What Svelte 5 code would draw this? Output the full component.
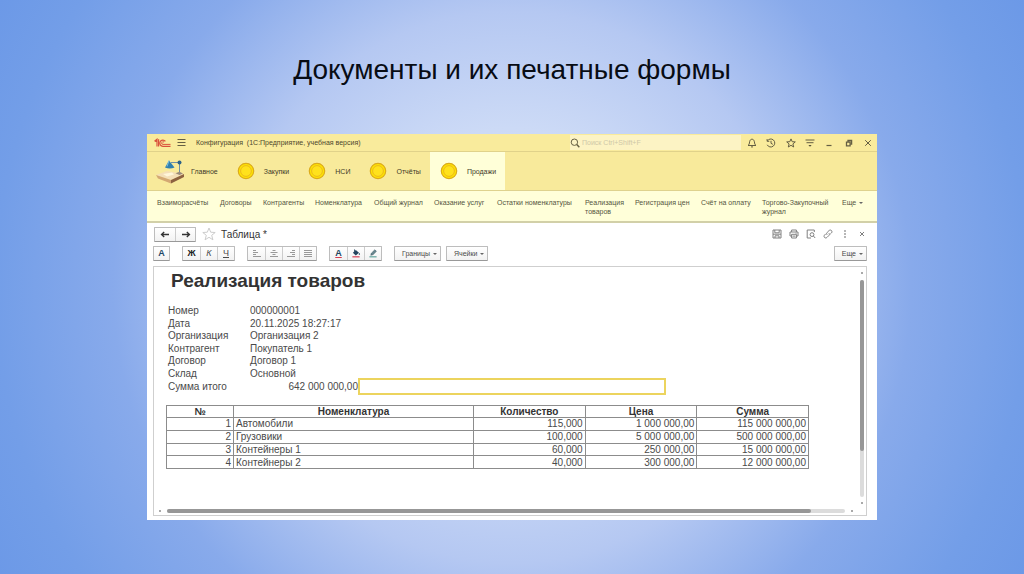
<script lang="ts">
  const sections = ['Закупки', 'НСИ', 'Отчёты', 'Продажи']
  let current = 'Продажи'

  const commands = [
    'Взаиморасчёты', 'Договоры', 'Контрагенты', 'Номенклатура',
    'Общий журнал', 'Оказание услуг', 'Остатки номенклатуры',
    'Реализация товаров', 'Регистрация цен', 'Счёт на оплату',
    'Торгово-Закупочный журнал'
  ]

  const details = [
    ['Номер', '000000001'],
    ['Дата', '20.11.2025 18:27:17'],
    ['Организация', 'Организация 2'],
    ['Контрагент', 'Покупатель 1'],
    ['Договор', 'Договор 1'],
    ['Склад', 'Основной']
  ]

  const rows = [
    ['Автомобили', '115,000', '1 000 000,00', '115 000 000,00'],
    ['Грузовики', '100,000', '5 000 000,00', '500 000 000,00'],
    ['Контейнеры 1', '60,000', '250 000,00', '15 000 000,00'],
    ['Контейнеры 2', '40,000', '300 000,00', '12 000 000,00']
  ]

  // line groups for the alignment buttons
  const aligns = [
    { name: 'По левому краю', d: 'M1 1.5h3M1 3.5h5M1 5.5h3M1 7.5h8' },
    { name: 'По центру', d: 'M3.5 1.5h3M1.5 3.5h7M3.5 5.5h3M1 7.5h8' },
    { name: 'По правому краю', d: 'M6 1.5h3M4 3.5h5M6 5.5h3M1 7.5h8' },
    { name: 'По ширине', d: 'M1 1.5h8M1 3.5h8M1 5.5h8M1 7.5h8' }
  ]
</script>

<main class="slide">
  <h1>Документы и их печатные формы</h1>

  <div class="window">
    <header class="titlebar">
      <svg class="logo" viewBox="0 0 17 10" aria-label="1С">
        <path d="M0.5 3.2L3 1.2V8.6M4.6 1.2V8.6M2 2.6V4" fill="none" stroke="#d9513c" stroke-width="1.2" />
        <path d="M11.4 3.4A3.1 3.1 0 1 0 8.9 8.3H16.5" fill="none" stroke="#d9513c" stroke-width="1.3" />
        <path d="M10 4.2A1.3 1.3 0 1 0 9 6.4H16.5" fill="none" stroke="#d9513c" stroke-width="1" />
      </svg>
      <button class="bare" aria-label="Меню">
        <svg class="burger" viewBox="0 0 9 9"><path d="M0.5 1.5h8M0.5 4.5h8M0.5 7.5h8" /></svg>
      </button>
      <span class="app-name">Конфигурация&nbsp; (1С:Предприятие, учебная версия)</span>
      <label class="search">
        <svg viewBox="0 0 10 10"><circle cx="4.4" cy="4.2" r="3.2" /><path d="M6.8 6.6L9.3 9.3" stroke-width="1.4" /></svg>
        <input type="text" placeholder="Поиск Ctrl+Shift+F" aria-label="Поиск" />
      </label>
      <div class="tools">
        <button class="bare" aria-label="Уведомления">
          <svg viewBox="0 0 10 10"><path d="M1 7.5C2.3 6.6 2.3 5.6 2.6 3.8C2.9 2.1 3.8 1.2 5 1.2S7.1 2.1 7.4 3.8C7.7 5.6 7.7 6.6 9 7.5ZM4 8.9h2" /></svg>
        </button>
        <button class="bare" aria-label="История">
          <svg viewBox="0 0 10 10"><path d="M1.3 3A4 4 0 1 1 1.2 6.8M1.1 1V3.3H3.3M5 2.8V5.3L6.8 6.3" /></svg>
        </button>
        <button class="bare" aria-label="Избранное">
          <svg viewBox="0 0 10 10"><path d="M5 0.9L6.2 3.7L9.3 3.9L6.9 5.9L7.7 9L5 7.3L2.3 9L3.1 5.9L0.7 3.9L3.8 3.7Z" /></svg>
        </button>
        <button class="bare" aria-label="Настройки">
          <svg viewBox="0 0 10 10"><path d="M0.5 2h9M1.5 4.7h7" /><path d="M3.4 7L5 8.8L6.6 7Z" fill="#554f35" stroke="none" /></svg>
        </button>
        <button class="bare" aria-label="Свернуть">
          <svg viewBox="0 0 10 10"><path d="M2.5 7.5h5" stroke-width="1.2" /></svg>
        </button>
        <button class="bare" aria-label="Восстановить">
          <svg viewBox="0 0 10 10"><path d="M2.5 4.2h3.6v3.6h-3.6zM4 3.8V2.5H7.6V6.2H6.8" stroke-width="1.3" /></svg>
        </button>
        <button class="bare" aria-label="Закрыть">
          <svg viewBox="0 0 10 10"><path d="M2.2 2.2L7.8 7.8M7.8 2.2L2.2 7.8" /></svg>
        </button>
      </div>
    </header>

    <nav class="sections">
      <button class="section home">
        <svg class="desk" viewBox="0 0 30 26">
          <path d="M1 17L12 13L29 16L16 22Z" fill="#f4dfb8" />
          <path d="M1 17L16 22V25.5L3 20.5Z" fill="#d3a873" />
          <path d="M16 22L29 16V19L16 25.5Z" fill="#8d6240" />
          <path d="M10 9.5L14 2.5L19.5 9.5Q15 11.5 10 9.5Z" fill="#2f7fae" />
          <path d="M14 2.5L12 8.5" stroke="#7fc0de" />
          <path d="M16 4.5L24.5 4.5V15" stroke="#6d8fa5" />
          <circle cx="24.5" cy="4.5" r="2" fill="#2d6387" />
          <path d="M20.5 15.3L24.5 13.8L28 15.6L24.5 17Z" fill="#9a8a7a" />
          <path d="M8 16L17 14.6L19 16.6L12 18.4Z" fill="#fff6da" />
        </svg>
        Главное
      </button>
      {#each sections as name (name)}
        <button class="section" class:active={name === current} on:click={() => (current = name)}>
          <svg class="coin" viewBox="0 0 18 18">
            <circle cx="9" cy="9" r="7.7" fill="#ffe600" stroke="#dcab1c" stroke-width="1.2" />
            <circle cx="9" cy="9" r="5.4" fill="#ffe21c" stroke="#ecb91c" stroke-width="1" />
          </svg>
          {name}
        </button>
      {/each}
    </nav>

    <nav class="commands">
      {#each commands as command (command)}
        <a href="#top">{command}</a>
      {/each}
      <a href="#top" class="more">Еще <i class="caret"></i></a>
    </nav>

    <div class="form-head">
      <div class="group nav-group">
        <button aria-label="Назад"><svg viewBox="0 0 10 8"><path d="M9 4H1.8M4.2 1.5L1.5 4L4.2 6.5" /></svg></button>
        <button aria-label="Вперед"><svg viewBox="0 0 10 8"><path d="M1 4H8.2M5.8 1.5L8.5 4L5.8 6.5" /></svg></button>
      </div>
      <svg class="fav" viewBox="0 0 14 14"><path d="M7 1L8.7 5.2L13.2 5.5L9.7 8.3L10.9 12.8L7 10.3L3.1 12.8L4.3 8.3L0.8 5.5L5.3 5.2Z" /></svg>
      <h2>Таблица *</h2>
      <div class="form-tools">
        <button class="bare" aria-label="Сохранить">
          <svg viewBox="0 0 10 10"><path d="M1 1h8v8H1zM2.8 1v2.8h4.4V1M1 5.2h8M3 9V6.8h4V9" /></svg>
        </button>
        <button class="bare" aria-label="Печать">
          <svg viewBox="0 0 10 10"><path d="M2.6 3V1h4.8V3M2.6 7H1V3h8V7H7.4M2.6 5.3h4.8V9H2.6zM3.5 7.1h3M6.6 4.2h1" /></svg>
        </button>
        <button class="bare" aria-label="Просмотр">
          <svg viewBox="0 0 10 10"><path d="M8.3 3V1H1.2V9H5" /><circle cx="6" cy="5.6" r="1.9" /><path d="M7.4 7L9.2 9" /></svg>
        </button>
        <button class="bare" aria-label="Ссылка">
          <svg viewBox="0 0 10 10"><path d="M4.3 5.9C3.3 5.1 3.4 4.2 4.2 3.4L6 1.6C7.8 0 10 2.2 8.4 4L7.2 5.2M5.7 4.1C6.7 4.9 6.6 5.8 5.8 6.6L4 8.4C2.2 10 0 7.8 1.6 6L2.8 4.8" /></svg>
        </button>
        <button class="bare" aria-label="Ещё действия">
          <svg viewBox="0 0 10 10"><path d="M5 1.3v1.5M5 4.3v1.5M5 7.3v1.5" stroke-width="1.5" /></svg>
        </button>
        <button class="bare" aria-label="Закрыть форму">
          <svg viewBox="0 0 10 10"><path d="M3 3L7 7M7 3L3 7" /></svg>
        </button>
      </div>
    </div>

    <div class="toolbar">
      <div class="group"><button class="font">А</button></div>
      <div class="group">
        <button class="bold">Ж</button>
        <button class="italic">К</button>
        <button class="under">Ч</button>
      </div>
      <div class="group align-group">
        {#each aligns as a (a.name)}
          <button aria-label={a.name}><svg viewBox="0 0 10 9"><path d={a.d} /></svg></button>
        {/each}
      </div>
      <div class="group colors">
        <button class="text-color">А</button>
        <button aria-label="Цвет фона">
          <svg viewBox="0 0 10 10"><path d="M1.5 4.2L4.8 1.2L8.3 4.2L4.8 7.2Z" fill="#24455f" /><path d="M3.4 0.5V3" stroke="#24455f" /><path d="M8.7 4.6v2" stroke="#24455f" /><path d="M1 8.7h8" stroke="#d83b50" stroke-width="1.3" /></svg>
        </button>
        <button aria-label="Цвет рамки">
          <svg viewBox="0 0 10 10"><path d="M2.5 7L3.2 4.6L7 0.9L8.8 2.6L5 6.3Z" fill="#68878f" stroke="#3f5d66" stroke-width="0.6" /><path d="M1 8.7h8" stroke="#4e9b92" stroke-width="1.2" /></svg>
        </button>
      </div>
      <div class="drops">
        <div class="group"><button class="drop">Границы <i class="caret"></i></button></div>
        <div class="group"><button class="drop">Ячейки <i class="caret"></i></button></div>
      </div>
      <div class="group last"><button class="drop">Еще <i class="caret"></i></button></div>
    </div>

    <div class="sheet">
      <div class="page">
        <h3>Реализация товаров</h3>

        <dl class="details">
          {#each details as [label, value] (label)}
            <div class="detail"><dt>{label}</dt><dd>{value}</dd></div>
          {/each}
          <div class="detail">
            <dt>Сумма итого</dt>
            <dd class="total">642 000 000,00</dd>
            <dd class="cell"><input type="text" aria-label="Ячейка" /></dd>
          </div>
        </dl>

        <table>
          <colgroup><col class="c-num" /><col class="c-name" /><col /><col /><col /></colgroup>
          <thead>
            <tr><th>№</th><th>Номенклатура</th><th>Количество</th><th>Цена</th><th>Сумма</th></tr>
          </thead>
          <tbody>
            {#each rows as [name, count, price, sum], i (name)}
              <tr><td>{i + 1}</td><td class="name">{name}</td><td>{count}</td><td>{price}</td><td>{sum}</td></tr>
            {/each}
          </tbody>
        </table>
      </div>

      <div class="bar vertical"><i class="dot"></i><div class="track"><div class="thumb"></div></div><i class="dot"></i></div>
      <div class="bar horizontal"><i class="dot"></i><div class="track"><div class="thumb"></div></div><i class="dot"></i></div>
    </div>
  </div>
</main>

<style>
:global(body) {
  margin: 0;
}
.slide {
  box-sizing: border-box;
  min-height: 100vh;
  padding: 50px 147px 54px;
  display: flex;
  flex-direction: column;
  font-family: "Liberation Sans", Arial, sans-serif;
  background: radial-gradient(circle farthest-corner at center, #d8e4f9 0%, #ccdaf6 27%, #b5c8f2 47%, #88aaeb 68%, #739ee8 88%, #6c99e7 100%);
}
h1 {
  margin: 0 0 44px;
  font-size: 28px;
  line-height: 40px;
  font-weight: normal;
  text-align: center;
  color: #080c14;
}
.window {
  flex: 1;
  display: flex;
  flex-direction: column;
  background: #fff;
  color: #4a4a4a;
  font-size: 7px;
  line-height: 9px;
}
button, input {
  font: inherit;
  color: inherit;
}
button {
  padding: 0;
  border: 0;
  background: none;
}
svg {
  display: block;
  fill: none;
  stroke: #555;
  stroke-width: 1;
}
.bare svg {
  width: 10px;
  height: 10px;
}

/* title bar */
.titlebar {
  display: flex;
  align-items: center;
  height: 17px;
  padding: 0 4px 0 7px;
  background: #f9eb9c;
  border-bottom: 1px solid #e0d28a;
}
.titlebar svg {
  stroke: #655f43;
}
.titlebar .logo {
  width: 17px;
  height: 10px;
  margin-right: 6px;
}
.titlebar .burger {
  width: 9px;
  height: 9px;
}
.app-name {
  margin-left: 10px;
  color: #4d472c;
}
.search {
  display: flex;
  align-items: center;
  gap: 2px;
  width: 171px;
  height: 15px;
  margin-left: auto;
  background: #fcf3c4;
}
.search svg {
  width: 10px;
  height: 10px;
}
.search input {
  flex: 1;
  min-width: 0;
  padding: 0;
  border: 0;
  background: none;
}
.search input::placeholder {
  color: #cfc8a8;
}
.tools {
  display: flex;
  justify-content: space-between;
  width: 126px;
  margin-left: 6px;
}

/* sections */
.sections {
  display: flex;
  height: 38px;
  background: #f8ea9b;
  border-bottom: 1px solid #ded28e;
}
.section {
  display: flex;
  align-items: center;
  gap: 9px;
  padding: 0 9px 0 10px;
  color: #3f3b28;
}
.section.home {
  gap: 6px;
  padding: 0 9px 0 8px;
}
.section.active {
  background: #ffffd8;
}
.desk {
  width: 30px;
  height: 26px;
  stroke: none;
}
.coin {
  width: 18px;
  height: 18px;
}

/* commands */
.commands {
  display: grid;
  grid-template-columns: 63fr 43fr 52fr 59fr 60fr 63fr 88fr 50fr 66fr 61fr 80fr 35fr;
  height: 23px;
  padding: 7px 0 0 10px;
  background: #ffffd9;
  border-bottom: 2px solid #d2d0a8;
}
.commands a {
  color: #55553f;
  text-decoration: none;
}
.caret {
  display: inline-block;
  width: 0;
  height: 0;
  margin-left: 1px;
  border: 2px solid transparent;
  border-top-color: #666;
  border-bottom: 0;
  vertical-align: middle;
}

/* form header */
.form-head {
  display: flex;
  align-items: center;
  height: 14px;
  margin: 4px 10px 0 7px;
}
.group {
  display: flex;
  height: 13px;
  border: 1px solid #bdbdbd;
  border-bottom-color: #999;
  border-radius: 1px;
  background: linear-gradient(#fff, #f2f2f2);
}
.group button {
  display: flex;
  align-items: center;
  justify-content: center;
  width: 17px;
}
.group button + button {
  border-left: 1px solid #ccc;
}
.group svg {
  width: 10px;
  height: 9px;
}
.nav-group button {
  width: 20px;
}
.nav-group svg {
  stroke: #333;
  stroke-width: 1.3;
}
.fav {
  width: 14px;
  height: 14px;
  margin: 0 5px 0 6px;
  stroke: #ccc;
}
h2 {
  margin: 0;
  font-size: 10px;
  font-weight: normal;
  color: #333;
}
.form-tools {
  display: flex;
  gap: 7px;
  margin-left: auto;
}
.form-tools svg {
  stroke: #808080;
}

/* toolbar */
.toolbar {
  display: flex;
  gap: 12px;
  margin: 5px 10px 5px 6px;
}
.toolbar button {
  font-size: 9px;
}
.toolbar .font {
  width: 15px;
  font-weight: bold;
  color: #1f4766;
}
.bold {
  font-weight: bold;
  color: #222;
}
.italic {
  font-style: italic;
}
.under {
  text-decoration: underline;
}
.align-group svg {
  stroke: #999;
}
.toolbar .text-color {
  font-weight: bold;
  color: #24455f;
  text-decoration: underline 1px #d83b50;
}
.colors svg {
  stroke: none;
}
.drops {
  display: flex;
  gap: 5px;
}
.toolbar .drop {
  gap: 2px;
  width: auto;
  padding: 0 3px 0 7px;
  font-size: 7px;
}
.last {
  margin-left: auto;
}

/* spreadsheet */
.sheet {
  flex: 1;
  display: grid;
  grid-template-columns: 1fr 8px;
  grid-template-rows: 1fr 8px;
  margin: 0 10px 4px 6px;
  border: 1px solid #cfcfcf;
  font-size: 10px;
  line-height: 12px;
}
.page {
  padding: 0 49px 0 12px;
}
h3 {
  margin: 3px 0 14px 5px;
  font-size: 19px;
  line-height: 21px;
  color: #333;
}
.details {
  display: grid;
  grid-auto-rows: 1fr;
  height: 88px;
  margin: 0 0 12px 2px;
}
.detail {
  display: grid;
  grid-template-columns: 82px 108px 308px;
  align-items: center;
}
dd {
  margin: 0;
  white-space: nowrap;
}
.total {
  text-align: right;
}
.cell {
  height: 17px;
  margin: -2px 0;
}
.cell input {
  display: block;
  box-sizing: border-box;
  width: 100%;
  height: 100%;
  padding: 0 2px;
  border: 2px solid #ecd45e;
  background: #fff;
}
table {
  width: 100%;
  height: 64px;
  table-layout: fixed;
  border-collapse: collapse;
}
.c-num {
  width: 67px;
}
.c-name {
  width: 240px;
}
th, td {
  padding: 0 2px;
  border: 1px solid #8c8c8c;
  line-height: 11px;
  text-align: right;
}
th {
  text-align: center;
  color: #333;
}
td.name {
  text-align: left;
}
.bar {
  display: flex;
  align-items: center;
}
.vertical {
  flex-direction: column;
  padding: 5px 0 3px;
}
.horizontal {
  padding: 0 5px;
}
.dot {
  width: 2px;
  height: 2px;
  background: #aaa;
}
.track {
  flex: 1;
  border-radius: 2px;
  background: #dcdcdc;
}
.vertical .track {
  width: 4px;
  margin: 6px 0 5px;
}
.horizontal .track {
  height: 4px;
  margin: 0 6px;
}
.thumb {
  border-radius: 2px;
  background: #979797;
}
.vertical .thumb {
  height: 79%;
}
.horizontal .thumb {
  width: 95%;
  height: 4px;
}
</style>
